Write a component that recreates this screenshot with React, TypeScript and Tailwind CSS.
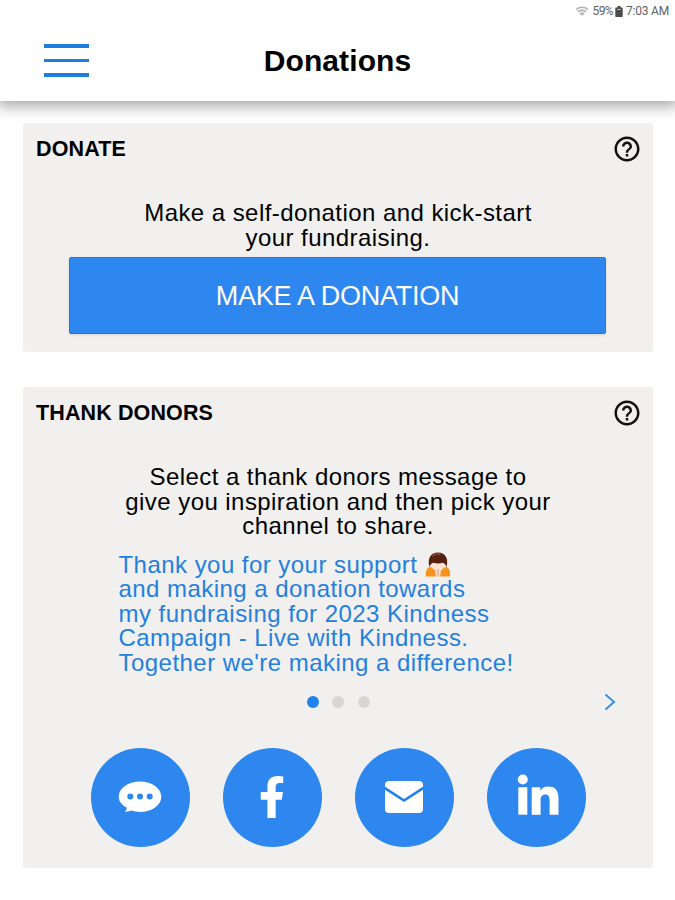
import React, { useState } from 'react';
import { FaFacebookF } from 'react-icons/fa';
import { MdHelpOutline } from 'react-icons/md';

const messageLines = [
  'and making a donation towards',
  'my fundraising for 2023 Kindness',
  'Campaign - Live with Kindness.',
  "Together we're making a difference!",
];

function StatusBar() {
  return (
    <div className="flex h-[22px] items-center justify-end gap-[2px] pr-[6px] font-['Roboto',sans-serif] text-[12px] text-[#5f5f5f]">
      <svg width="14" height="11" viewBox="0 0 14 11" fill="none" className="mr-px">
        <path d="M1 3.6C4.6.6 9.4.6 13 3.6M3 5.8c2.500-2 5.500-2 8 0M5 8c1.300-1 2.700-1 4 0" stroke="#b5b5b5" strokeWidth="1.8" />
        <path d="M5.500 8.300 7 10l1.500-1.700z" fill="#b5b5b5" />
      </svg>
      <span className="tracking-[-0.6px]">59%</span>
      <svg width="8" height="11" viewBox="0 0 8 11">
        <path d="M2.500 0h3v1.500H7a.7.7 0 0 1 .7.700v8.100a.7.7 0 0 1-.7.700H1a.7.7 0 0 1-.7-.7V2.200A.7.7 0 0 1 1 1.500h1.500z" fill="#4a4a4a" />
        <path d="M2.500 3.500h3" stroke="#d0d0d0" />
      </svg>
      <span className="ml-px tracking-[-0.2px]">7:03 AM</span>
    </div>
  );
}

function BowingPerson() {
  return (
    <svg width="26" height="26" viewBox="0 0 26 26" className="ml-2">
      <path d="M5 11h16v6l-3 6H8l-3-6z" fill="#fbe3d6" />
      <path d="M4.500 15C2 6 6 .5 13 .5S24 6 21.500 15c-.8-2.200-1.800-3.500-3.500-4.200-3 .9-7 .9-10 0-1.700.7-2.700 2-3.500 4.200z" fill="#57200f" />
      <path d="M7.500 4.500c2-2.500 5.500-3 8-2" stroke="#8d4a33" strokeWidth="1.500" fill="none" />
      <path d="M9.500 24.500c-.5-4 .7-7 3.500-8 2.800 1 4 4 3.500 8z" fill="#fbd9c6" />
      <path d="M13 17v7.500" stroke="#e3a991" strokeWidth="1" />
      <path d="M1 24.500c-.8-5 .8-9 4-9.500 2.500.5 3.200 2.500 5 3.500l.8 6zM25 24.500c.8-5-.8-9-4-9.500-2.500.5-3.200 2.500-5 3.500l-.8 6z" fill="#f7941d" />
    </svg>
  );
}

function ChatIcon() {
  return (
    <svg width="44" height="34" viewBox="0 0 44 34" className="-mt-0.5">
      <path d="M22 1.500c11.800 0 21.300 6.700 21.300 15.300S33.800 32 22 32c-3.200 0-6.200-.5-8.900-1.400-1.600.9-4 1.300-6.300 1.100 1.200-1.100 1.900-2.500 2-4C3.800 25 .7 21.200.7 16.800.7 8.200 10.200 1.500 22 1.500z" fill="#fff" />
      <circle cx="12.300" cy="16.500" r="3" fill="#2e87ee" />
      <circle cx="22" cy="16.500" r="3" fill="#2e87ee" />
      <circle cx="31.700" cy="16.500" r="3" fill="#2e87ee" />
    </svg>
  );
}

function MailIcon() {
  return (
    <svg width="38" height="32" viewBox="0 0 38 32" className="-mt-px">
      <rect width="38" height="32" rx="4" fill="#fff" />
      <path d="M-.5 6.800 19 19.500 38.500 6.800" stroke="#2380e8" strokeWidth="2.600" fill="none" />
    </svg>
  );
}

function LinkedInLogo() {
  return (
    <svg width="42" height="42" viewBox="0 0 42 42" fill="#fff" className="-mt-1.5 ml-[3px]">
      <circle cx="5.800" cy="5.500" r="5" />
      <rect x="1.300" y="13.200" width="9" height="27.500" />
      <path d="M14.700 13.200h8.600v3.500c1.600-2.700 4.400-4.200 8-4.200 7.500 0 10.200 4.500 10.200 12.300v15.900h-8.900V26.500c0-3.600-.9-6.100-4.300-6.100-3.500 0-4.700 2.500-4.700 6v14.300h-8.900z" />
    </svg>
  );
}

const channels = [
  { name: 'Message', icon: <ChatIcon /> },
  { name: 'Facebook', icon: <FaFacebookF size={42} className="-mt-px" /> },
  { name: 'Email', icon: <MailIcon /> },
  { name: 'LinkedIn', icon: <LinkedInLogo /> },
];

function CardHeader({ title }: { title: string }) {
  return (
    <div className="flex h-[52px] items-center justify-between pl-[13px] pr-[11px]">
      <h2 className="pt-px text-[21.500px] font-bold tracking-[0.12px]">{title}</h2>
      <MdHelpOutline size={30} className="text-[#111]" />
    </div>
  );
}

export default function App() {
  const [activeSlide, setActiveSlide] = useState(0);

  return (
    <div className="flex h-[900px] w-[675px] flex-col overflow-hidden bg-white font-['Liberation_Sans',Arial,sans-serif] text-black">
      <header className="h-[101px] shrink-0 bg-white shadow-[0_2px_14px_3px_rgba(0,0,0,0.36)]">
        <StatusBar />
        <div className="grid h-[78px] grid-cols-[1fr_auto_1fr] items-center px-11">
          <button className="mt-[-1px] flex w-[45px] flex-col gap-[11px]">
            <span className="h-[3.500px] bg-[#1c7ee0]" />
            <span className="h-[3.500px] bg-[#1c7ee0]" />
            <span className="h-[3.500px] bg-[#1c7ee0]" />
          </button>
          <h1 className="pb-0.5 text-[30px] font-bold tracking-[0.1px]">Donations</h1>
        </div>
      </header>

      <main className="flex flex-col gap-[35px] pl-[23px] pr-[22px] pt-[22px]">
        {/* Donate */}
        <section className="h-[229px] rounded-[3px] bg-[#f1f0ef]">
          <CardHeader title="DONATE" />
          <p className="pt-[26px] text-center text-[24px] leading-[24.500px] tracking-[0.44px]">
            Make a self-donation and kick-start
            <br />
            your fundraising.
          </p>
          <button className="mx-[46px] mt-[7px] flex h-[77px] w-[537px] items-center justify-center rounded-[2px] border border-[#1c7ee4] bg-[#2e87ee] pt-px text-[27px] tracking-[-0.25px] text-white shadow-sm">
            MAKE A DONATION
          </button>
        </section>

        {/* Thank donors */}
        <section className="h-[481px] rounded-[3px] bg-[#f1f0ef]">
          <CardHeader title="THANK DONORS" />
          <p className="pt-[26px] text-center text-[24px] leading-[24.500px] tracking-[0.44px]">
            Select a thank donors message to
            <br />
            give you inspiration and then pick your
            <br />
            channel to share.
          </p>
          <div className="ml-[95.500px] mt-[14px] whitespace-nowrap text-[24px] leading-[24.500px] tracking-[0.46px] text-[#2380de]">
            <div className="flex h-[24.500px] items-center">
              Thank you for your support
              <BowingPerson />
            </div>
            {messageLines.map((line) => (
              <div key={line}>{line}</div>
            ))}
          </div>

          <div className="mt-[17px] grid h-5 grid-cols-[1fr_auto_1fr] items-center px-[37px]">
            <div className="col-start-2 flex gap-[13.500px]">
              {[0, 1, 2].map((i) => (
                <button
                  key={i}
                  onClick={() => setActiveSlide(i)}
                  className={`h-3 w-3 rounded-full ${i === activeSlide ? 'bg-[#2182ee]' : 'bg-[#d7d6d1]'}`}
                />
              ))}
            </div>
            <button className="justify-self-end" onClick={() => setActiveSlide((activeSlide + 1) % 3)}>
              <svg width="12" height="18" viewBox="0 0 12 18" fill="none">
                <path d="m1.500 1.500 8.500 7.500-8.500 7.500" stroke="#3d8fe0" strokeWidth="2" />
              </svg>
            </button>
          </div>

          <div className="mt-9 flex gap-[33px] pl-[67.500px]">
            {channels.map((channel) => (
              <button
                key={channel.name}
                aria-label={channel.name}
                className="flex h-[99px] w-[99px] items-center justify-center rounded-full bg-[#2e87ee] text-white"
              >
                {channel.icon}
              </button>
            ))}
          </div>
        </section>
      </main>
    </div>
  );
}
